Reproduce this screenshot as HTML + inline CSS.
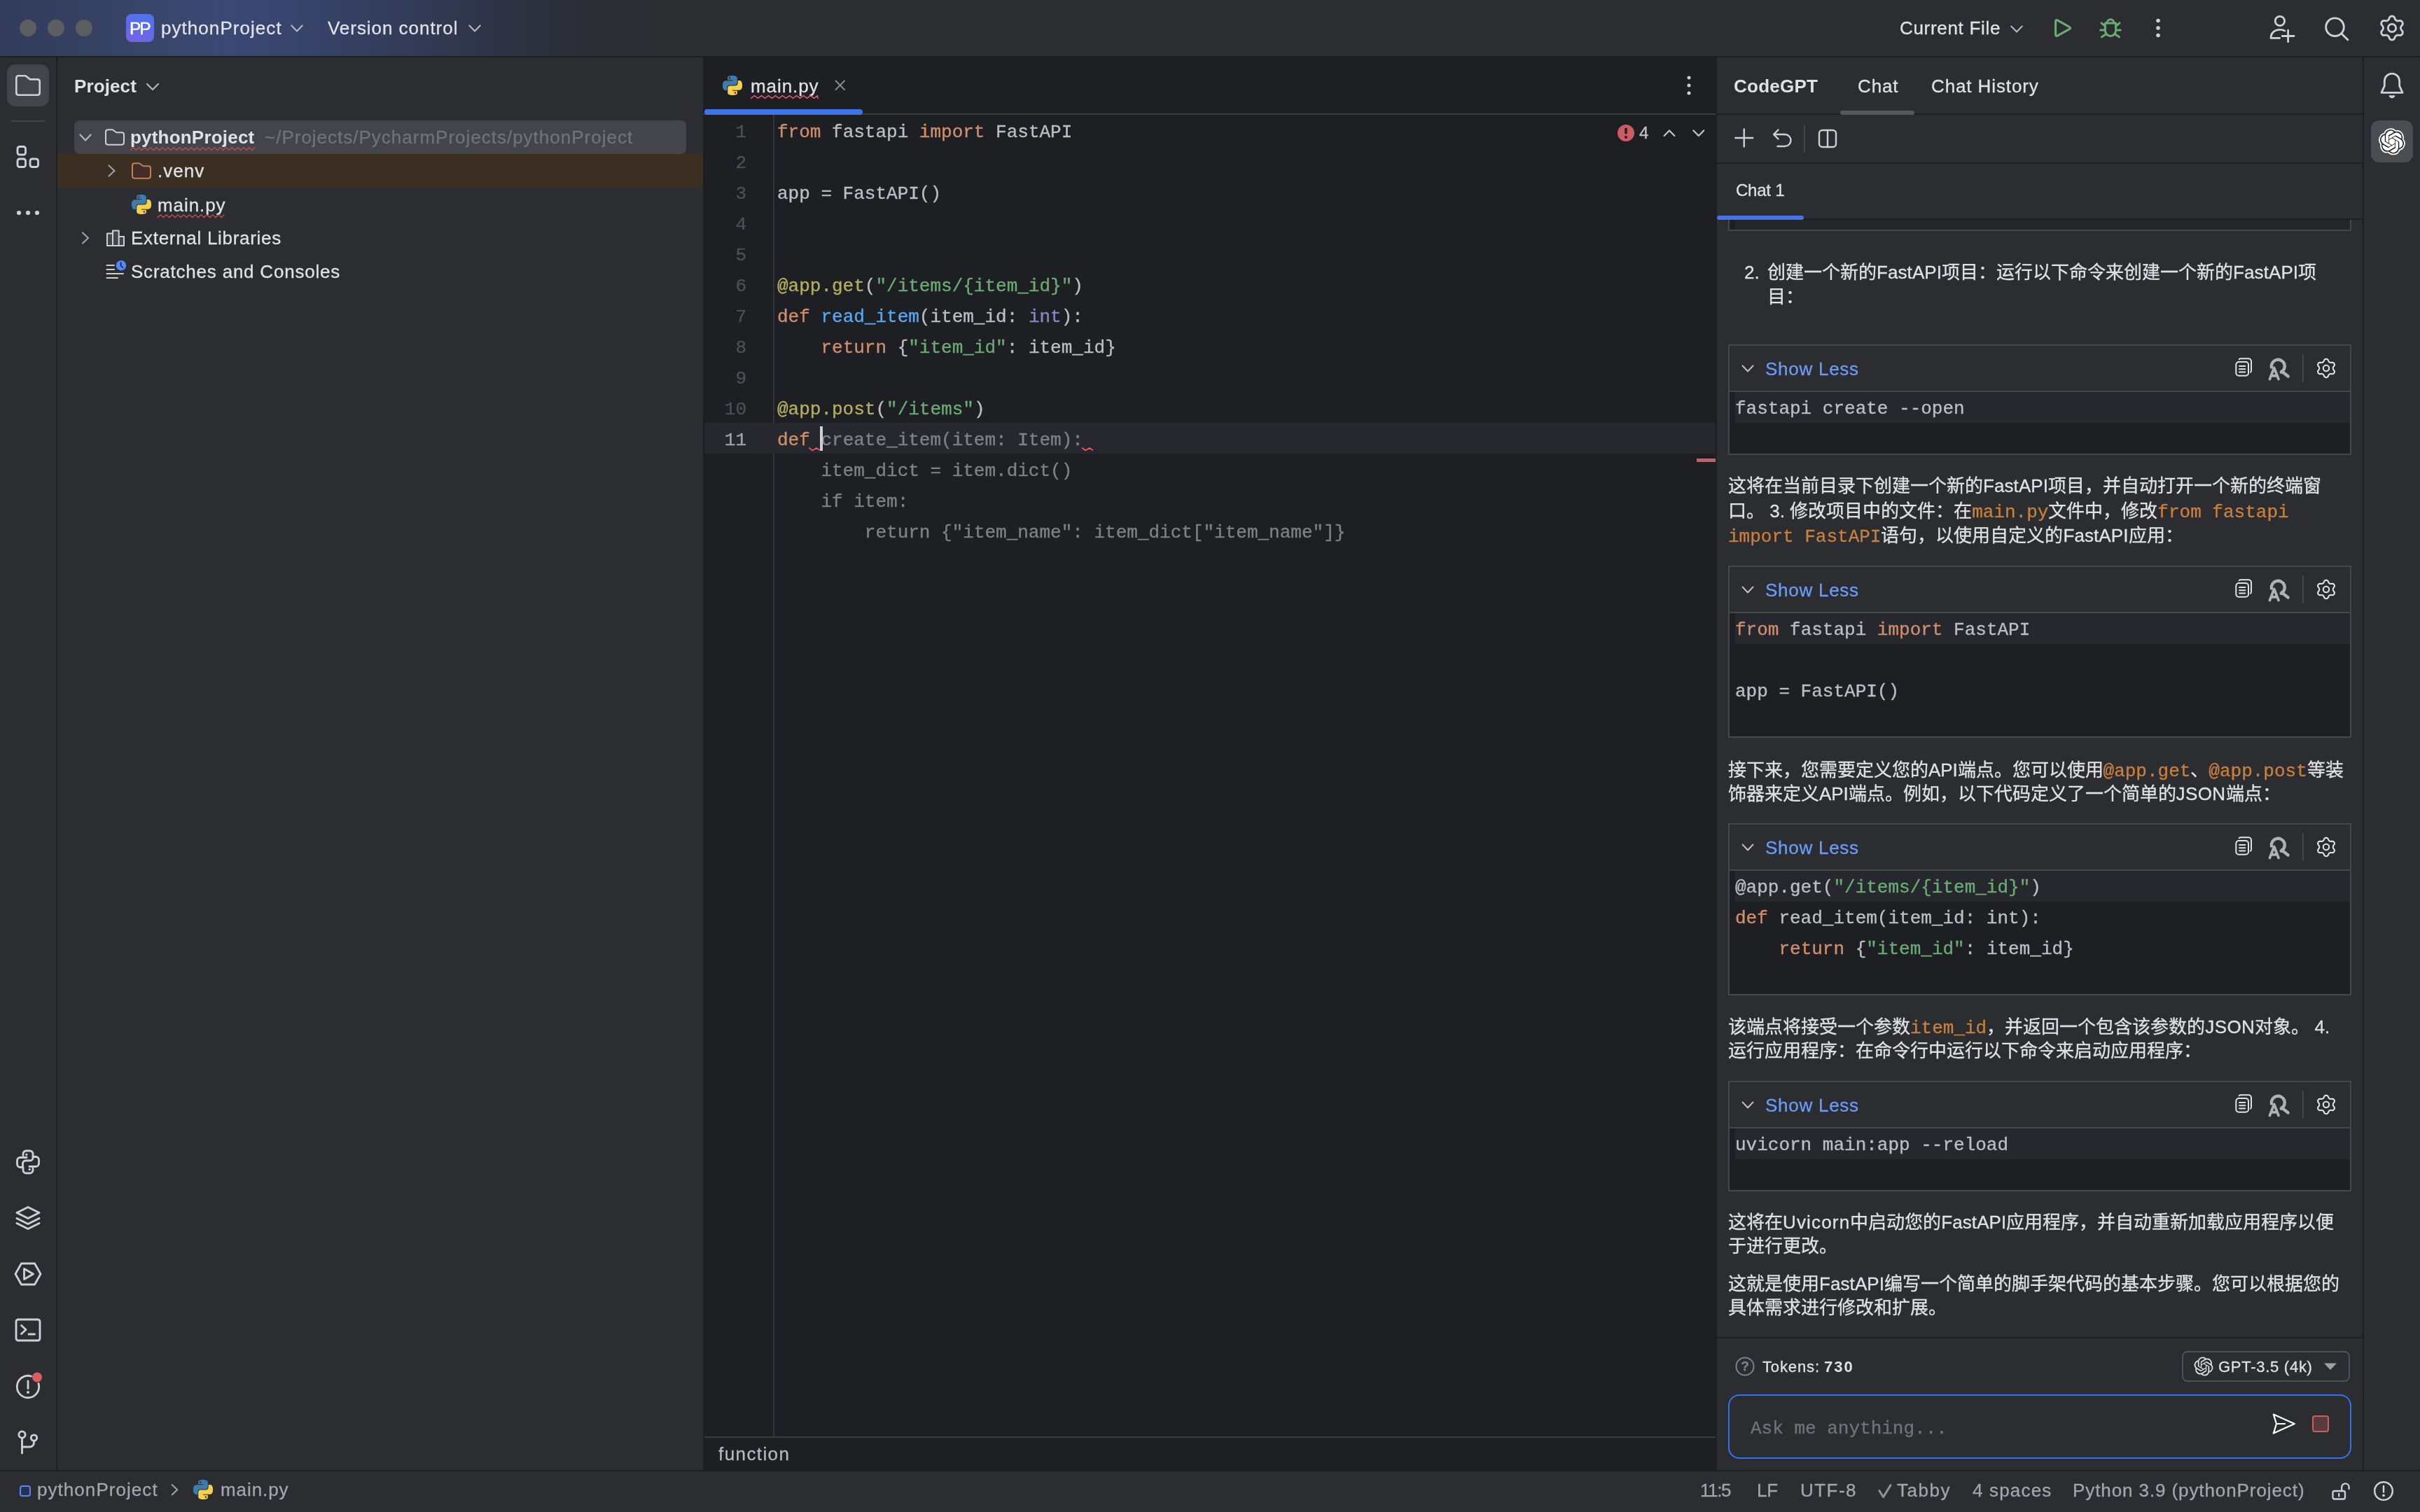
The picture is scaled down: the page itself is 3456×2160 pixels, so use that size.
<!DOCTYPE html>
<html lang="zh-CN"><head><meta charset="utf-8"><title>pythonProject – main.py</title>
<style>
html,body{margin:0;padding:0;font-family:"Liberation Sans",sans-serif}
body{width:3456px;height:2160px;overflow:hidden;position:relative;background:#2b2d30;color:#dfe1e5;font-family:"Liberation Sans",sans-serif;font-size:26px}
body>div{position:absolute}
.s{will-change:transform;white-space:pre;font-family:"Liberation Sans",sans-serif;-webkit-text-stroke:0.3px}
.m{will-change:transform;white-space:pre;font-family:"Liberation Mono",monospace;color:#bcbec4;-webkit-text-stroke:0.35px}
.ov{position:absolute;left:0;top:0;pointer-events:none}
.k{color:#cf8e6d}.st{color:#6aab73}.d{color:#b3ae60}.f{color:#56a8f5}.b{color:#8888c6}.g{color:#7f8185}
.ic{font-family:"Liberation Mono",monospace;color:#c9803e}

</style></head>
<body>
<div style="left:0px;top:0px;width:3456px;height:80px;background:linear-gradient(90deg,#323b5a 0px,#384569 200px,#3b4874 330px,#374268 460px,#323a55 600px,#2e3344 720px,#2c2e36 840px,#2b2d30 960px);"></div>
<div style="left:0px;top:80px;width:3456px;height:2px;background:#1e1f22;"></div>
<div style="left:28px;top:28px;width:24px;height:24px;background:#5d5e62;border-radius:50%"></div>
<div style="left:68px;top:28px;width:24px;height:24px;background:#5d5e62;border-radius:50%"></div>
<div style="left:108px;top:28px;width:24px;height:24px;background:#5d5e62;border-radius:50%"></div>
<div style="left:180px;top:20px;width:40px;height:40px;background:linear-gradient(200deg,#4a74ee 0%,#5f6be9 50%,#7a62e6 100%);border-radius:8px"></div>
<div class="s" style="left:185.4px;top:21.08px;font-size:24.6px;line-height:40px;color:#ffffff;letter-spacing:-2.1px;-webkit-text-stroke:0.5px #fff;">PP</div>
<div class="s" style="left:230px;top:20.49px;font-size:26px;line-height:40px;letter-spacing:1.052px;">pythonProject</div>
<div class="s" style="left:468px;top:20.49px;font-size:26px;line-height:40px;letter-spacing:0.959px;">Version control</div>
<div class="s" style="left:2712.5px;top:20.49px;font-size:26px;line-height:40px;letter-spacing:0.685px;">Current File</div>
<div style="left:80px;top:82px;width:2px;height:2018px;background:#1e1f22;"></div>
<div style="left:10px;top:92px;width:60px;height:60px;background:#43454a;border-radius:12px"></div>
<div style="left:16px;top:172px;width:48px;height:2px;background:#43454a;"></div>
<div class="s" style="left:106px;top:102.99px;font-size:26px;line-height:40px;font-weight:700;-webkit-text-stroke:0;letter-spacing:0.117px;">Project</div>
<div style="left:106px;top:172px;width:874px;height:48px;background:#43454a;border-radius:8px"></div>
<div style="left:82px;top:220px;width:922px;height:48px;background:#3b2f24;"></div>
<div class="s" style="left:186px;top:176.49px;font-size:26px;line-height:40px;font-weight:700;-webkit-text-stroke:0;letter-spacing:0.202px;">pythonProject</div>
<div class="s" style="left:378px;top:176.49px;font-size:26px;line-height:40px;color:#6f737a;letter-spacing:0.996px;">~/Projects/PycharmProjects/pythonProject</div>
<div class="s" style="left:225px;top:224.49px;font-size:26px;line-height:40px;letter-spacing:1.051px;">.venv</div>
<div class="s" style="left:225px;top:272.69px;font-size:26px;line-height:40px;letter-spacing:0.919px;">main.py</div>
<div class="s" style="left:187px;top:320.49px;font-size:26px;line-height:40px;letter-spacing:0.699px;">External Libraries</div>
<div class="s" style="left:187px;top:368.39px;font-size:26px;line-height:40px;letter-spacing:0.781px;">Scratches and Consoles</div>
<div style="left:1004px;top:82px;width:1448px;height:2018px;background:#1e1f22;"></div>
<div style="left:1004px;top:162px;width:1446px;height:2px;background:#393b40;"></div>
<div style="left:1006px;top:156px;width:226px;height:8px;background:#3f73e9;border-radius:4px"></div>
<div class="s" style="left:1072.4px;top:102.99px;font-size:26px;line-height:40px;letter-spacing:0.919px;">main.py</div>
<div style="left:1104px;top:164px;width:2px;height:1888px;background:#313438;"></div>
<div style="left:1006px;top:604px;width:1444px;height:44px;background:#26282e;"></div>
<div style="left:1006px;top:2052px;width:1444px;height:2px;background:#393b40;"></div>
<div class="s" style="left:1026.4px;top:2056.99px;font-size:26px;line-height:40px;color:#b4b8bf;letter-spacing:1.413px;">function</div>
<div style="left:2423px;top:655px;width:27px;height:5px;background:#cf5b62;"></div>
<div class="s" style="left:2341px;top:170.48px;font-size:24px;line-height:40px;color:#c0c2c6;">4</div>
<div class="m" style="left:1110.3px;top:166.80px;font-size:26px;line-height:44px;"><span class="k">from</span> fastapi <span class="k">import</span> FastAPI</div>
<div class="m" style="left:1110.3px;top:254.80px;font-size:26px;line-height:44px;">app = FastAPI()</div>
<div class="m" style="left:1110.3px;top:386.80px;font-size:26px;line-height:44px;"><span class="d">@app.get</span>(<span class="st">"/items/{item_id}"</span>)</div>
<div class="m" style="left:1110.3px;top:430.80px;font-size:26px;line-height:44px;"><span class="k">def</span> <span class="f">read_item</span>(item_id: <span class="b">int</span>):</div>
<div class="m" style="left:1110.3px;top:474.80px;font-size:26px;line-height:44px;">    <span class="k">return</span> {<span class="st">"item_id"</span>: item_id}</div>
<div class="m" style="left:1110.3px;top:562.80px;font-size:26px;line-height:44px;"><span class="d">@app.post</span>(<span class="st">"/items"</span>)</div>
<div class="m" style="left:1110.3px;top:606.80px;font-size:26px;line-height:44px;"><span class="k">def</span> <span class="g">create_item(item: Item):</span></div>
<div class="m" style="left:1110.3px;top:650.80px;font-size:26px;line-height:44px;"><span class="g">    item_dict = item.dict()</span></div>
<div class="m" style="left:1110.3px;top:694.80px;font-size:26px;line-height:44px;"><span class="g">    if item:</span></div>
<div class="m" style="left:1110.3px;top:738.80px;font-size:26px;line-height:44px;"><span class="g">        return {"item_name": item_dict["item_name"]}</span></div>
<div class="m" style="left:1004px;top:166.80px;font-size:26px;line-height:44px;color:#4b5059;width:62px;text-align:right;">1</div>
<div class="m" style="left:1004px;top:210.80px;font-size:26px;line-height:44px;color:#4b5059;width:62px;text-align:right;">2</div>
<div class="m" style="left:1004px;top:254.80px;font-size:26px;line-height:44px;color:#4b5059;width:62px;text-align:right;">3</div>
<div class="m" style="left:1004px;top:298.80px;font-size:26px;line-height:44px;color:#4b5059;width:62px;text-align:right;">4</div>
<div class="m" style="left:1004px;top:342.80px;font-size:26px;line-height:44px;color:#4b5059;width:62px;text-align:right;">5</div>
<div class="m" style="left:1004px;top:386.80px;font-size:26px;line-height:44px;color:#4b5059;width:62px;text-align:right;">6</div>
<div class="m" style="left:1004px;top:430.80px;font-size:26px;line-height:44px;color:#4b5059;width:62px;text-align:right;">7</div>
<div class="m" style="left:1004px;top:474.80px;font-size:26px;line-height:44px;color:#4b5059;width:62px;text-align:right;">8</div>
<div class="m" style="left:1004px;top:518.80px;font-size:26px;line-height:44px;color:#4b5059;width:62px;text-align:right;">9</div>
<div class="m" style="left:1004px;top:562.80px;font-size:26px;line-height:44px;color:#4b5059;width:62px;text-align:right;">10</div>
<div class="m" style="left:1004px;top:606.80px;font-size:26px;line-height:44px;color:#a1a3ab;width:62px;text-align:right;">11</div>
<div style="left:1170.8px;top:608.5px;width:4px;height:35px;background:#ced0d6;"></div>
<div style="left:2452px;top:82px;width:922px;height:2018px;background:#2b2d30;"></div>
<div class="s" style="left:2476.4px;top:102.99px;font-size:26px;line-height:40px;font-weight:700;-webkit-text-stroke:0;letter-spacing:0.258px;">CodeGPT</div>
<div class="s" style="left:2652.6px;top:102.99px;font-size:26px;line-height:40px;letter-spacing:0.854px;">Chat</div>
<div class="s" style="left:2758px;top:102.99px;font-size:26px;line-height:40px;letter-spacing:0.885px;">Chat History</div>
<div style="left:2452px;top:162px;width:922px;height:2px;background:#1e1f22;"></div>
<div style="left:2628px;top:158px;width:106px;height:6px;background:#55585e;border-radius:3px"></div>
<div style="left:2452px;top:232px;width:922px;height:2px;background:#1e1f22;"></div>
<div style="left:2576px;top:178px;width:2px;height:40px;background:#43454a;"></div>
<div class="s" style="left:2478.8px;top:251.68px;font-size:24px;line-height:40px;letter-spacing:-0.231px;">Chat 1</div>
<div style="left:2452px;top:312px;width:922px;height:2px;background:#1e1f22;"></div>
<div style="left:2452px;top:308px;width:124px;height:6px;background:#4573e8;border-radius:3px"></div>
<div style="left:2468px;top:314px;width:890px;height:16px;background:#25262a;border:2px solid #45474c;border-top:none;box-sizing:border-box"></div>
<div style="left:2470px;top:314px;width:8px;height:14px;background:#1e1f22;"></div>
<div style="left:2468px;top:492px;width:890px;height:158px;background:#1e1f22;border:2px solid #45474c;box-sizing:border-box"></div>
<div style="left:2470px;top:494px;width:886px;height:64px;background:#2b2d30;"></div>
<div style="left:2470px;top:558px;width:886px;height:2px;background:#45474c;"></div>
<div style="left:2478px;top:560px;width:878px;height:44px;background:#26282e;"></div>
<div class="s" style="left:2520.6px;top:506.99px;font-size:26px;line-height:40px;color:#6b9bf8;letter-spacing:0.736px;">Show Less</div>
<div style="left:3288px;top:506px;width:2px;height:40px;background:#43454a;"></div>
<div class="m" style="left:2477.8px;top:561.80px;font-size:26px;line-height:44px;">fastapi create --open</div>
<div style="left:2468px;top:808px;width:890px;height:246px;background:#1e1f22;border:2px solid #45474c;box-sizing:border-box"></div>
<div style="left:2470px;top:810px;width:886px;height:64px;background:#2b2d30;"></div>
<div style="left:2470px;top:874px;width:886px;height:2px;background:#45474c;"></div>
<div style="left:2478px;top:876px;width:878px;height:44px;background:#26282e;"></div>
<div class="s" style="left:2520.6px;top:822.99px;font-size:26px;line-height:40px;color:#6b9bf8;letter-spacing:0.736px;">Show Less</div>
<div style="left:3288px;top:822px;width:2px;height:40px;background:#43454a;"></div>
<div class="m" style="left:2477.8px;top:877.80px;font-size:26px;line-height:44px;"><span class="k">from</span> fastapi <span class="k">import</span> FastAPI</div>
<div class="m" style="left:2477.8px;top:965.80px;font-size:26px;line-height:44px;">app = FastAPI()</div>
<div style="left:2468px;top:1176px;width:890px;height:246px;background:#1e1f22;border:2px solid #45474c;box-sizing:border-box"></div>
<div style="left:2470px;top:1178px;width:886px;height:64px;background:#2b2d30;"></div>
<div style="left:2470px;top:1242px;width:886px;height:2px;background:#45474c;"></div>
<div style="left:2478px;top:1244px;width:878px;height:44px;background:#26282e;"></div>
<div class="s" style="left:2520.6px;top:1190.99px;font-size:26px;line-height:40px;color:#6b9bf8;letter-spacing:0.736px;">Show Less</div>
<div style="left:3288px;top:1190px;width:2px;height:40px;background:#43454a;"></div>
<div class="m" style="left:2477.8px;top:1245.80px;font-size:26px;line-height:44px;">@app.get(<span class="st">"/items/{item_id}"</span>)</div>
<div class="m" style="left:2477.8px;top:1289.80px;font-size:26px;line-height:44px;"><span class="k">def</span> read_item(item_id: int):</div>
<div class="m" style="left:2477.8px;top:1333.80px;font-size:26px;line-height:44px;">    <span class="k">return</span> {<span class="st">"item_id"</span>: item_id}</div>
<div style="left:2468px;top:1544px;width:890px;height:158px;background:#1e1f22;border:2px solid #45474c;box-sizing:border-box"></div>
<div style="left:2470px;top:1546px;width:886px;height:64px;background:#2b2d30;"></div>
<div style="left:2470px;top:1610px;width:886px;height:2px;background:#45474c;"></div>
<div style="left:2478px;top:1612px;width:878px;height:44px;background:#26282e;"></div>
<div class="s" style="left:2520.6px;top:1558.99px;font-size:26px;line-height:40px;color:#6b9bf8;letter-spacing:0.736px;">Show Less</div>
<div style="left:3288px;top:1558px;width:2px;height:40px;background:#43454a;"></div>
<div class="m" style="left:2477.8px;top:1613.80px;font-size:26px;line-height:44px;">uvicorn main:app --reload</div>
<div class="s" style="left:2490.7px;top:372.49px;font-size:26px;line-height:34px;">2.</div>
<div class="s" style="left:2524px;top:372.49px;font-size:26px;line-height:34px;">创建一个新的<span style="letter-spacing:0.085px">FastAPI</span>项目：运行以下命令来创建一个新的<span style="letter-spacing:0.085px">FastAPI</span>项</div>
<div class="s" style="left:2524px;top:406.69px;font-size:26px;line-height:34px;">目：</div>
<div class="s" style="left:2468.2px;top:676.59px;font-size:26px;line-height:34px;">这将在当前目录下创建一个新的<span style="letter-spacing:0.085px">FastAPI</span>项目，并自动打开一个新的终端窗</div>
<div class="s" style="left:2468.2px;top:712.99px;font-size:26px;line-height:34px;">口。 3. 修改项目中的文件：在<span class="ic">main.py</span>文件中，修改<span class="ic">from fastapi</span></div>
<div class="s" style="left:2468.2px;top:748.29px;font-size:26px;line-height:34px;"><span class="ic">import FastAPI</span>语句，以使用自定义的<span style="letter-spacing:0.085px">FastAPI</span>应用：</div>
<div class="s" style="left:2468.2px;top:1082.59px;font-size:26px;line-height:34px;">接下来，您需要定义您的<span style="letter-spacing:-0.130px">API</span>端点。您可以使用<span class="ic">@app.get</span>、<span class="ic">@app.post</span>等装</div>
<div class="s" style="left:2468.2px;top:1116.99px;font-size:26px;line-height:34px;">饰器来定义<span style="letter-spacing:-0.130px">API</span>端点。例如，以下代码定义了一个简单的<span style="letter-spacing:0.414px">JSON</span>端点：</div>
<div class="s" style="left:2468.2px;top:1450.49px;font-size:26px;line-height:34px;">该端点将接受一个参数<span class="ic">item_id</span>，并返回一个包含该参数的<span style="letter-spacing:0.414px">JSON</span>对象。 4.</div>
<div class="s" style="left:2468.2px;top:1484.29px;font-size:26px;line-height:34px;">运行应用程序：在命令行中运行以下命令来启动应用程序：</div>
<div class="s" style="left:2468.2px;top:1728.79px;font-size:26px;line-height:34px;">这将在<span style="letter-spacing:1.161px">Uvicorn</span>中启动您的<span style="letter-spacing:0.085px">FastAPI</span>应用程序，并自动重新加载应用程序以便</div>
<div class="s" style="left:2468.2px;top:1762.99px;font-size:26px;line-height:34px;">于进行更改。</div>
<div class="s" style="left:2468.2px;top:1816.59px;font-size:26px;line-height:34px;">这就是使用<span style="letter-spacing:0.085px">FastAPI</span>编写一个简单的脚手架代码的基本步骤。您可以根据您的</div>
<div class="s" style="left:2468.2px;top:1850.79px;font-size:26px;line-height:34px;">具体需求进行修改和扩展。</div>
<div style="left:2452px;top:1910px;width:922px;height:2px;background:#1e1f22;"></div>
<div class="s" style="left:2517px;top:1933.38px;font-size:22px;line-height:40px;letter-spacing:0.867px;">Tokens:</div>
<div class="s" style="left:2604.5px;top:1933.38px;font-size:22px;line-height:40px;font-weight:700;-webkit-text-stroke:0;letter-spacing:2.055px;">730</div>
<div style="left:3116px;top:1930px;width:240px;height:44px;background:transparent;border:2px solid #4e5157;border-radius:8px;box-sizing:border-box"></div>
<div class="s" style="left:3168.3px;top:1933.38px;font-size:22px;line-height:40px;letter-spacing:0.729px;">GPT-3.5 (4k)</div>
<div style="left:2468px;top:1992px;width:890px;height:92px;background:#2b2d30;border:2px solid #3574f0;border-radius:16px;box-sizing:border-box"></div>
<div class="m" style="left:2500px;top:2019.07px;font-size:26px;line-height:44px;color:#6f737a;">Ask me anything...</div>
<div style="left:3302px;top:2022px;width:24px;height:24px;background:#5b3a3b;border:2px solid #c9605d;border-radius:4px;box-sizing:border-box"></div>
<div style="left:3374px;top:82px;width:2px;height:2018px;background:#1e1f22;"></div>
<div style="left:3386px;top:172px;width:60px;height:60px;background:#4b4d53;border-radius:12px"></div>
<div style="left:0px;top:2100px;width:3456px;height:2px;background:#1e1f22;"></div>
<div style="left:28px;top:2122px;width:16px;height:16px;background:#25324d;border:2px solid #548af7;border-radius:4px;box-sizing:border-box"></div>
<div class="s" style="left:53px;top:2108.29px;font-size:26px;line-height:40px;color:#a2a6ad;letter-spacing:1.052px;">pythonProject</div>
<div class="s" style="left:314.8px;top:2108.29px;font-size:26px;line-height:40px;color:#a2a6ad;letter-spacing:0.919px;">main.py</div>
<div class="s" style="left:2428px;top:2108.59px;font-size:26px;line-height:40px;color:#a2a6ad;letter-spacing:-1.411px;">11:5</div>
<div class="s" style="left:2509px;top:2108.59px;font-size:26px;line-height:40px;color:#a2a6ad;letter-spacing:-0.281px;">LF</div>
<div class="s" style="left:2571px;top:2108.59px;font-size:26px;line-height:40px;color:#a2a6ad;letter-spacing:1.465px;">UTF-8</div>
<div class="s" style="left:2709px;top:2108.59px;font-size:26px;line-height:40px;color:#a2a6ad;letter-spacing:1.512px;">Tabby</div>
<div class="s" style="left:2816.6px;top:2108.59px;font-size:26px;line-height:40px;color:#a2a6ad;letter-spacing:1.181px;">4 spaces</div>
<div class="s" style="left:2960px;top:2108.59px;font-size:26px;line-height:40px;color:#a2a6ad;letter-spacing:0.908px;">Python 3.9 (pythonProject)</div>
<div class="s" style="left:2485px;top:1939px;font-size:19px;line-height:26px;color:#7b848f;width:14px;text-align:center;font-weight:700">?</div>
<svg class="ov" width="3456" height="2160" viewBox="0 0 3456 2160">
<g fill="none" stroke="#b9bcc3" stroke-width="2.0" stroke-linecap="round" stroke-linejoin="round" ><path d="M416.25,36.5 L424,44.5 L431.75,36.5"/></g>
<g fill="none" stroke="#b9bcc3" stroke-width="2.0" stroke-linecap="round" stroke-linejoin="round" ><path d="M670.25,36.5 L678,44.5 L685.75,36.5"/></g>
<g fill="none" stroke="#b9bcc3" stroke-width="2.0" stroke-linecap="round" stroke-linejoin="round" ><path d="M2872.25,37.5 L2880,45.5 L2887.75,37.5"/></g>
<g fill="none" stroke="#6aab73" stroke-width="3.1" stroke-linecap="round" stroke-linejoin="round" transform="translate(2947 40)"><path d="M-11.40,-9.10 Q-11.40,-12.60 -8.34,-10.90 L8.14,-1.70 Q11.20,0.00 8.14,1.70 L-8.34,10.90 Q-11.40,12.60 -11.40,9.10 Z"/></g>
<g fill="none" stroke="#6aab73" stroke-width="3.0" stroke-linecap="round" stroke-linejoin="round" transform="translate(3014 40)"><path d="M-5,-7 a5,5.3 0 0 1 10,0"/><path d="M-7.6,-7 h15.2 v10.5 a7.6,8 0 0 1 -15.2,0 z"/><path d="M-8.5,3 h-5.8 M8.5,3 h5.8 M-8,-3 l-5,-4.2 M8,-3 l5,-4.2 M-6.8,9 l-5.7,3.8 M6.8,9 l5.7,3.8"/></g>
<circle cx="3082" cy="29.5" r="2.8" fill="#ced0d6"/>
<circle cx="3082" cy="40" r="2.8" fill="#ced0d6"/>
<circle cx="3082" cy="50.5" r="2.8" fill="#ced0d6"/>
<g fill="none" stroke="#ced0d6" stroke-width="2.8" stroke-linecap="round" stroke-linejoin="round" ><circle cx="3255.9" cy="30" r="6.7" /><path d="M3255.6,54.4 H3243 C3243,47 3248.5,42.4 3256,42.4 C3258.5,42.4 3260.8,42.9 3262.8,43.9"/><path d="M3267.6,43.2 v16.6 M3259.2,51.5 h16.8"/></g>
<g fill="none" stroke="#ced0d6" stroke-width="2.9" stroke-linecap="round" stroke-linejoin="round" ><circle cx="3334.5" cy="38.7" r="12.8" /><path d="M3343.8,48 L3352.8,56.8"/></g>
<g fill="none" stroke="#ced0d6" stroke-width="2.8" stroke-linecap="round" stroke-linejoin="round" transform="translate(3416 40)"><path d="M12.50,-0.00 L12.55,-0.82 L12.75,-1.68 L13.29,-2.64 L14.25,-3.82 L15.10,-5.13 L15.38,-6.37 L15.18,-7.49 L14.72,-8.50 L14.07,-9.40 L13.20,-10.13 L11.99,-10.52 L10.43,-10.43 L8.93,-10.19 L7.83,-10.20 L6.98,-10.45 L6.25,-10.83 L5.56,-11.28 L4.92,-11.88 L4.36,-12.83 L3.82,-14.25 L3.11,-15.64 L2.17,-16.50 L1.11,-16.89 L0.00,-17.00 L-1.11,-16.89 L-2.17,-16.50 L-3.11,-15.64 L-3.82,-14.25 L-4.36,-12.83 L-4.92,-11.88 L-5.56,-11.28 L-6.25,-10.83 L-6.98,-10.45 L-7.83,-10.20 L-8.93,-10.19 L-10.43,-10.43 L-11.99,-10.52 L-13.20,-10.13 L-14.07,-9.40 L-14.72,-8.50 L-15.18,-7.49 L-15.38,-6.37 L-15.10,-5.13 L-14.25,-3.82 L-13.29,-2.64 L-12.75,-1.68 L-12.55,-0.82 L-12.50,-0.00 L-12.55,0.82 L-12.75,1.68 L-13.29,2.64 L-14.25,3.82 L-15.10,5.13 L-15.38,6.37 L-15.18,7.49 L-14.72,8.50 L-14.07,9.40 L-13.20,10.13 L-11.99,10.52 L-10.43,10.43 L-8.93,10.19 L-7.83,10.20 L-6.98,10.45 L-6.25,10.83 L-5.56,11.28 L-4.92,11.88 L-4.36,12.83 L-3.82,14.25 L-3.11,15.64 L-2.17,16.50 L-1.11,16.89 L-0.00,17.00 L1.11,16.89 L2.17,16.50 L3.11,15.64 L3.82,14.25 L4.36,12.83 L4.92,11.88 L5.56,11.28 L6.25,10.83 L6.98,10.45 L7.83,10.20 L8.93,10.19 L10.43,10.43 L11.99,10.52 L13.20,10.13 L14.07,9.40 L14.72,8.50 L15.18,7.49 L15.38,6.37 L15.10,5.13 L14.25,3.82 L13.29,2.64 L12.75,1.68 L12.55,0.82Z"/><circle cx="0" cy="0" r="5.7" /></g>
<g fill="none" stroke="#ced0d6" stroke-width="2.6" stroke-linecap="round" stroke-linejoin="round" transform="translate(40 122)"><path d="M-16.7,-10.5 Q-16.7,-13.7 -13.5,-13.7 H-3.58 L3.0100000000000007,-8.599999999999998 H13.5 Q16.7,-8.599999999999998 16.7,-5.399999999999998 V10.5 Q16.7,13.7 13.5,13.7 H-13.5 Q-16.7,13.7 -16.7,10.5 Z"/></g>
<g fill="none" stroke="#ced0d6" stroke-width="2.85" stroke-linecap="round" stroke-linejoin="round" ><rect x="25" y="209.5" width="11.5" height="11.5" rx="3"/><rect x="25" y="227" width="11.5" height="11.5" rx="3"/><rect x="43" y="227" width="11.5" height="11.5" rx="3"/></g>
<circle cx="27" cy="304" r="3.1" fill="#ced0d6"/>
<circle cx="40" cy="304" r="3.1" fill="#ced0d6"/>
<circle cx="53" cy="304" r="3.1" fill="#ced0d6"/>
<g fill="none" stroke="#ced0d6" stroke-width="2.85" stroke-linecap="round" stroke-linejoin="round" transform="translate(40 1660)"><path d="M-7,-9.5 v-2 a4.5,4.5 0 0 1 4.5,-4.5 h5 a4.5,4.5 0 0 1 4.5,4.5 v5.5 a4,4 0 0 1 -4,4 h-6.5 a4,4 0 0 0 -4,4 v5.5 h-3.5 a4.5,4.5 0 0 1 -4.5,-4.5 v-5 a4.5,4.5 0 0 1 4.5,-4.5 h9"/><path d="M7,9.5 v2 a4.5,4.5 0 0 1 -4.5,4.5 h-5 a4.5,4.5 0 0 1 -4.5,-4.5 v-4 M7,-7.5 h4 a4.5,4.5 0 0 1 4.5,4.5 v5 a4.5,4.5 0 0 1 -4.5,4.5 h-9"/><circle cx="-2.2" cy="-10.6" r="1.1" fill="#ced0d6" stroke-width="1.2"/><circle cx="2.2" cy="10.6" r="1.1" fill="#ced0d6" stroke-width="1.2"/></g>
<g fill="none" stroke="#ced0d6" stroke-width="2.85" stroke-linecap="round" stroke-linejoin="round" transform="translate(40 1740)"><path d="M0,-15.5 L16,-7.5 L0,0.5 L-16,-7.5 Z M-16,0.5 L0,8.5 L16,0.5 M-16,7.5 L0,15.5 L16,7.5"/></g>
<g fill="none" stroke="#ced0d6" stroke-width="2.85" stroke-linecap="round" stroke-linejoin="round" transform="translate(40 1820)"><path d="M-18,0 L-9.5,-15 H9.5 L18,0 L9.5,15 H-9.5 Z M-5.5,-7.5 L7.5,0 L-5.5,7.5 Z"/></g>
<g fill="none" stroke="#ced0d6" stroke-width="2.85" stroke-linecap="round" stroke-linejoin="round" transform="translate(40 1900)"><rect x="-17" y="-15" width="34" height="30" rx="3"/><path d="M-9.5,-6.5 L-3,-0.5 L-9.5,5.5 M1,6 H9.5"/></g>
<g fill="none" stroke="#ced0d6" stroke-width="2.8" stroke-linecap="round" stroke-linejoin="round" transform="translate(40 1981)"><path d="M4.5,-15 A15.7,15.7 0 1 0 15,-4.5"/><path d="M0,-8 V2.5"/></g>
<circle cx="40" cy="1989" r="2" fill="#ced0d6"/>
<circle cx="53" cy="1967.5" r="7" fill="#db5c5c"/>
<g fill="none" stroke="#ced0d6" stroke-width="2.85" stroke-linecap="round" stroke-linejoin="round" transform="translate(40 2060)"><circle cx="-8.5" cy="-10.5" r="4.6" /><circle cx="8.5" cy="-6" r="4.2" /><path d="M-8.5,-5.5 V16 M8.5,-1.5 V1 a6,6 0 0 1 -6,6 H-8.5"/></g>
<g fill="none" stroke="#b4b8bf" stroke-width="2.2" stroke-linecap="round" stroke-linejoin="round" ><path d="M210.0,120.0 L218,128.0 L226.0,120.0"/></g>
<g fill="none" stroke="#b4b8bf" stroke-width="2.2" stroke-linecap="round" stroke-linejoin="round" ><path d="M114.5,192.5 L122,200.5 L129.5,192.5"/></g>
<g fill="none" stroke="#ced0d6" stroke-width="2.0" stroke-linecap="round" stroke-linejoin="round" transform="translate(164 196)"><path d="M-13.0,-7.55 Q-13.0,-10.75 -9.8,-10.75 H-3.24 L2.3555,-6.755 H9.8 Q13.0,-6.755 13.0,-3.5549999999999997 V7.55 Q13.0,10.75 9.8,10.75 H-9.8 Q-13.0,10.75 -13.0,7.55 Z"/></g>
<g fill="none" stroke="#9da0a8" stroke-width="2.2" stroke-linecap="round" stroke-linejoin="round" ><path d="M155.5,236.5 L163.5,244 L155.5,251.5"/></g>
<g fill="#412e28" stroke="#c77d55" stroke-width="2.0" stroke-linecap="round" stroke-linejoin="round" transform="translate(202 244)"><path d="M-13.0,-7.55 Q-13.0,-10.75 -9.8,-10.75 H-3.24 L2.3555,-6.755 H9.8 Q13.0,-6.755 13.0,-3.5549999999999997 V7.55 Q13.0,10.75 9.8,10.75 H-9.8 Q-13.0,10.75 -13.0,7.55 Z"/></g>
<g transform="translate(188 278) scale(1.1666666666666667)" fill-rule="evenodd"><path fill="#3f7cad" d="M14.25.18l.9.2.73.26.59.3.45.32.34.34.25.34.16.33.1.3.04.26.02.2-.01.13V8.5l-.05.63-.13.55-.21.46-.26.38-.3.31-.33.25-.35.19-.35.14-.33.1-.3.07-.26.04-.21.02H8.77l-.69.05-.59.14-.5.22-.41.27-.33.32-.27.35-.2.36-.15.37-.1.35-.07.32-.04.27-.02.21v3.06H3.17l-.21-.03-.28-.07-.32-.12-.35-.18-.36-.26-.36-.36-.35-.46-.32-.59-.28-.73-.21-.88-.14-1.05-.05-1.23.06-1.22.16-1.04.24-.87.32-.71.36-.57.4-.44.42-.33.42-.24.4-.16.36-.1.32-.05.24-.01h.16l.06.01h8.16v-.83H6.18l-.01-2.75-.02-.37.05-.34.11-.31.17-.28.25-.26.31-.23.38-.2.44-.18.51-.15.58-.12.64-.1.71-.06.77-.04.84-.02 1.27.05zM7.95 2.16l-.23.33-.08.41.08.41.23.34.33.22.41.09.41-.09.33-.22.23-.34.08-.41-.08-.41-.23-.33-.33-.22-.41-.09-.41.09z"/><path fill="#f6d04a" d="M21.04 6.11l.28.06.32.12.35.18.36.27.36.35.35.47.32.59.28.73.21.88.14 1.04.05 1.23-.06 1.23-.16 1.04-.24.86-.32.71-.36.57-.4.45-.42.33-.42.24-.4.16-.36.09-.32.05-.24.02-.16-.01h-8.22v.82h5.84l.01 2.76.02.36-.05.34-.11.31-.17.29-.25.25-.31.24-.38.2-.44.17-.51.15-.58.13-.64.09-.71.07-.77.04-.84.01-1.27-.04-1.07-.14-.9-.2-.73-.25-.59-.3-.45-.33-.34-.34-.25-.34-.16-.33-.1-.3-.04-.25-.02-.2.01-.13v-5.34l.05-.64.13-.54.21-.46.26-.38.3-.32.33-.24.35-.2.35-.14.33-.1.3-.06.26-.04.21-.02.13-.01h5.84l.69-.05.59-.14.5-.21.41-.28.33-.32.27-.35.2-.36.15-.36.1-.35.07-.32.04-.28.02-.21V6.07h2.09l.14.01zM14.57 20.36l-.23.33-.08.41.08.41.23.33.33.23.41.08.41-.08.33-.23.23-.33.08-.41-.08-.41-.23-.33-.33-.23-.41-.08-.41.08z"/></g>
<g fill="none" stroke="#9da0a8" stroke-width="2.2" stroke-linecap="round" stroke-linejoin="round" ><path d="M118.0,332.5 L126.0,340 L118.0,347.5"/></g>
<g fill="#43454a" stroke="#ced0d6" stroke-width="2.0" stroke-linecap="round" stroke-linejoin="round" ><path d="M153,351 V333.5 h8 V351 M161,351 V329.5 h8.7 V351 M169.7,351 V338 h7.3 V351 Z M153,351 H177"/></g>
<g fill="none" stroke="#ced0d6" stroke-width="2.0" stroke-linecap="round" stroke-linejoin="round" ><path d="M152.5,379 H163 M152.5,385 H163 M152.5,391 H176 M152.5,397 H168"/></g>
<circle cx="173" cy="379.2" r="7.2" fill="#548af7"/>
<g fill="none" stroke="#1e2a4a" stroke-width="1.8" stroke-linecap="round" stroke-linejoin="round" ><path d="M172.6,375 V379.6 L175.4,382.3"/></g>
<g fill="none" stroke="#bd4a46" stroke-width="1.5" stroke-linecap="round" stroke-linejoin="round" ><path d="M186.0,214.5 L190.2,210.7 L194.3,214.5 L198.5,210.7 L202.6,214.5 L206.8,210.7 L210.9,214.5 L215.1,210.7 L219.2,214.5 L223.4,210.7 L227.5,214.5 L231.7,210.7 L235.8,214.5 L240.0,210.7 L244.1,214.5 L248.3,210.7 L252.4,214.5 L256.6,210.7 L260.7,214.5 L264.9,210.7 L269.0,214.5 L273.1,210.7 L277.3,214.5 L281.4,210.7 L285.6,214.5 L289.7,210.7 L293.9,214.5 L298.0,210.7 L302.2,214.5 L306.3,210.7 L310.5,214.5 L314.6,210.7 L318.8,214.5 L322.9,210.7 L327.1,214.5 L331.2,210.7 L335.4,214.5 L339.5,210.7 L343.7,214.5 L347.8,210.7 L352.0,214.5 L356.1,210.7 L360.3,214.5 L364.0,210.7"/></g>
<g fill="none" stroke="#bd4a46" stroke-width="1.5" stroke-linecap="round" stroke-linejoin="round" ><path d="M225.0,310.6 L229.2,306.8 L233.3,310.6 L237.5,306.8 L241.6,310.6 L245.8,306.8 L249.9,310.6 L254.1,306.8 L258.2,310.6 L262.4,306.8 L266.5,310.6 L270.6,306.8 L274.8,310.6 L278.9,306.8 L283.1,310.6 L287.2,306.8 L291.4,310.6 L295.5,306.8 L299.7,310.6 L303.8,306.8 L308.0,310.6 L312.1,306.8 L316.3,310.6 L320.0,306.8"/></g>
<g transform="translate(1032 108) scale(1.1666666666666667)" fill-rule="evenodd"><path fill="#3f7cad" d="M14.25.18l.9.2.73.26.59.3.45.32.34.34.25.34.16.33.1.3.04.26.02.2-.01.13V8.5l-.05.63-.13.55-.21.46-.26.38-.3.31-.33.25-.35.19-.35.14-.33.1-.3.07-.26.04-.21.02H8.77l-.69.05-.59.14-.5.22-.41.27-.33.32-.27.35-.2.36-.15.37-.1.35-.07.32-.04.27-.02.21v3.06H3.17l-.21-.03-.28-.07-.32-.12-.35-.18-.36-.26-.36-.36-.35-.46-.32-.59-.28-.73-.21-.88-.14-1.05-.05-1.23.06-1.22.16-1.04.24-.87.32-.71.36-.57.4-.44.42-.33.42-.24.4-.16.36-.1.32-.05.24-.01h.16l.06.01h8.16v-.83H6.18l-.01-2.75-.02-.37.05-.34.11-.31.17-.28.25-.26.31-.23.38-.2.44-.18.51-.15.58-.12.64-.1.71-.06.77-.04.84-.02 1.27.05zM7.95 2.16l-.23.33-.08.41.08.41.23.34.33.22.41.09.41-.09.33-.22.23-.34.08-.41-.08-.41-.23-.33-.33-.22-.41-.09-.41.09z"/><path fill="#f6d04a" d="M21.04 6.11l.28.06.32.12.35.18.36.27.36.35.35.47.32.59.28.73.21.88.14 1.04.05 1.23-.06 1.23-.16 1.04-.24.86-.32.71-.36.57-.4.45-.42.33-.42.24-.4.16-.36.09-.32.05-.24.02-.16-.01h-8.22v.82h5.84l.01 2.76.02.36-.05.34-.11.31-.17.29-.25.25-.31.24-.38.2-.44.17-.51.15-.58.13-.64.09-.71.07-.77.04-.84.01-1.27-.04-1.07-.14-.9-.2-.73-.25-.59-.3-.45-.33-.34-.34-.25-.34-.16-.33-.1-.3-.04-.25-.02-.2.01-.13v-5.34l.05-.64.13-.54.21-.46.26-.38.3-.32.33-.24.35-.2.35-.14.33-.1.3-.06.26-.04.21-.02.13-.01h5.84l.69-.05.59-.14.5-.21.41-.28.33-.32.27-.35.2-.36.15-.36.1-.35.07-.32.04-.28.02-.21V6.07h2.09l.14.01zM14.57 20.36l-.23.33-.08.41.08.41.23.33.33.23.41.08.41-.08.33-.23.23-.33.08-.41-.08-.41-.23-.33-.33-.23-.41-.08-.41.08z"/></g>
<g fill="none" stroke="#df5a6c" stroke-width="1.5" stroke-linecap="round" stroke-linejoin="round" ><path d="M1072.5,140.4 L1077.5,136.6 L1082.5,140.4 L1087.5,136.6 L1092.5,140.4 L1097.5,136.6 L1102.5,140.4 L1107.5,136.6 L1112.5,140.4 L1117.5,136.6 L1122.5,140.4 L1127.5,136.6 L1132.5,140.4 L1137.5,136.6 L1142.5,140.4 L1147.5,136.6 L1152.5,140.4 L1157.5,136.6 L1162.5,140.4 L1167.5,136.6 L1168.0,140.4"/></g>
<g fill="none" stroke="#868a91" stroke-width="2.0" stroke-linecap="round" stroke-linejoin="round" ><path d="M1193.5,115.5 L1206,128 M1206,115.5 L1193.5,128"/></g>
<circle cx="2412" cy="111" r="2.5" fill="#ced0d6"/>
<circle cx="2412" cy="122" r="2.5" fill="#ced0d6"/>
<circle cx="2412" cy="133" r="2.5" fill="#ced0d6"/>
<circle cx="2322" cy="190" r="12" fill="#cd5b63"/>
<rect x="2320.2" y="182.5" width="3.6" height="9" rx="1.6" fill="#2b1c1e"/><circle cx="2322" cy="196" r="2.1" fill="#2b1c1e"/>
<g fill="none" stroke="#c3c5ca" stroke-width="2.2" stroke-linecap="round" stroke-linejoin="round" ><path d="M2376.6,194.0 L2384,186.39999999999998 L2391.4,194.0"/></g>
<g fill="none" stroke="#c3c5ca" stroke-width="2.2" stroke-linecap="round" stroke-linejoin="round" ><path d="M2418.4,186.39999999999998 L2425.8,194.0 L2433.2000000000003,186.39999999999998"/></g>
<g fill="none" stroke="#f75464" stroke-width="1.6" stroke-linecap="round" stroke-linejoin="round" ><path d="M1155.7,640 L1160.2,643.5 L1166,640 L1170.6,643"/></g>
<g fill="none" stroke="#f75464" stroke-width="1.6" stroke-linecap="round" stroke-linejoin="round" ><path d="M1545.5,640 L1550,643.5 L1555.8,640 L1560.4,643"/></g>
<g fill="none" stroke="#ced0d6" stroke-width="2.4" stroke-linecap="round" stroke-linejoin="round" ><path d="M2478.2,197 H2503.2 M2490.7,184.5 V209.5"/></g>
<g fill="none" stroke="#ced0d6" stroke-width="2.4" stroke-linecap="round" stroke-linejoin="round" ><path d="M2539.5,185.5 L2533,192 L2539.5,198.5 M2533.5,192 H2549 a8.5,8.5 0 0 1 0,17 H2538.5"/></g>
<g fill="none" stroke="#ced0d6" stroke-width="2.4" stroke-linecap="round" stroke-linejoin="round" ><rect x="2598" y="186" width="24" height="24" rx="4.5"/><path d="M2610,186 V210"/></g>
<g fill="none" stroke="#ced0d6" stroke-width="2.8" stroke-linecap="round" stroke-linejoin="round" ><path d="M3400.9,132.4 L3405.3,122.8 V115.8 a10.7,10.7 0 0 1 21.4,0 V122.8 L3431.1,132.4 Z"/></g>
<path d="M3411.6,136.2 h8.9 a4.45,4.1 0 0 1 -8.9,0 z" fill="#ced0d6"/>
<g transform="translate(3398.4 184.70000000000002) scale(1.4666666666666668)"><path d="M22.2819 9.8211a5.9847 5.9847 0 0 0-.5157-4.9108 6.0462 6.0462 0 0 0-6.5098-2.9A6.0651 6.0651 0 0 0 4.9807 4.1818a5.9847 5.9847 0 0 0-3.9977 2.9 6.0462 6.0462 0 0 0 .7427 7.0966 5.98 5.98 0 0 0 .511 4.9107 6.051 6.051 0 0 0 6.5146 2.9001A5.9847 5.9847 0 0 0 13.2599 24a6.0557 6.0557 0 0 0 5.7718-4.2058 5.9894 5.9894 0 0 0 3.9977-2.9001 6.0557 6.0557 0 0 0-.7475-7.0729z" fill="#ffffff" stroke="#ffffff" stroke-width="1.9" stroke-linejoin="round"/><path d="M22.2819 9.8211a5.9847 5.9847 0 0 0-.5157-4.9108 6.0462 6.0462 0 0 0-6.5098-2.9A6.0651 6.0651 0 0 0 4.9807 4.1818a5.9847 5.9847 0 0 0-3.9977 2.9 6.0462 6.0462 0 0 0 .7427 7.0966 5.98 5.98 0 0 0 .511 4.9107 6.051 6.051 0 0 0 6.5146 2.9001A5.9847 5.9847 0 0 0 13.2599 24a6.0557 6.0557 0 0 0 5.7718-4.2058 5.9894 5.9894 0 0 0 3.9977-2.9001 6.0557 6.0557 0 0 0-.7475-7.0729zm-9.022 12.6081a4.4755 4.4755 0 0 1-2.8764-1.0408l.1419-.0804 4.7783-2.7582a.7948.7948 0 0 0 .3927-.6813v-6.7369l2.02 1.1686a.071.071 0 0 1 .038.052v5.5826a4.504 4.504 0 0 1-4.4945 4.4944zm-9.6607-4.1254a4.4708 4.4708 0 0 1-.5346-3.0137l.142.0852 4.783 2.7582a.7712.7712 0 0 0 .7806 0l5.8428-3.3685v2.3324a.0804.0804 0 0 1-.0332.0615L9.74 19.9502a4.4992 4.4992 0 0 1-6.1408-1.6464zM2.3408 7.8956a4.485 4.485 0 0 1 2.3655-1.9728V11.6a.7664.7664 0 0 0 .3879.6765l5.8144 3.3543-2.0201 1.1685a.0757.0757 0 0 1-.071 0l-4.8303-2.7865A4.504 4.504 0 0 1 2.3408 7.872zm16.5963 3.8558L13.1038 8.364 15.1192 7.2a.0757.0757 0 0 1 .071 0l4.8303 2.7913a4.4944 4.4944 0 0 1-.6765 8.1042v-5.6772a.79.79 0 0 0-.407-.667zm2.0107-3.0231l-.142-.0852-4.7735-2.7818a.7759.7759 0 0 0-.7854 0L9.409 9.2297V6.8974a.0662.0662 0 0 1 .0284-.0615l4.8303-2.7866a4.4992 4.4992 0 0 1 6.6802 4.66zM8.3065 12.863l-2.02-1.1638a.0804.0804 0 0 1-.038-.0567V6.0742a4.4992 4.4992 0 0 1 7.3757-3.4537l-.142.0805L8.704 5.459a.7948.7948 0 0 0-.3927.6813zm1.0976-2.3654l2.602-1.4998 2.6069 1.4998v2.9994l-2.5974 1.4997-2.6067-1.4997Z" fill="#17181a" stroke="#ffffff" stroke-width="0.6"/></g>
<g fill="none" stroke="#bdc0c6" stroke-width="2.0" stroke-linecap="round" stroke-linejoin="round" ><path d="M2488.5,522.5 L2496,530.5 L2503.5,522.5"/></g>
<g fill="none" stroke="#dfe1e5" stroke-width="2.0" stroke-linecap="round" stroke-linejoin="round" ><rect x="3193.3" y="517" width="17.7" height="19.8" rx="4"/><path d="M3197.6,513.3 a3,3 0 0 1 2.5,-1 h10.9 a4,4 0 0 1 4,4 v13 a3,3 0 0 1 -1,2.5"/></g>
<g fill="none" stroke="#dfe1e5" stroke-width="2.0" stroke-linecap="round" stroke-linejoin="round" stroke-linecap="butt"><path d="M3198,523 H3206.3 M3198,527.2 H3206.3 M3198,531.4 H3206.3"/></g>
<g fill="none" stroke="#b0b1b3" stroke-width="4.4" stroke-linecap="round" stroke-linejoin="round" stroke-linecap="butt"><path d="M3243.89,524.62 A9.5,9.5 0 1 1 3257.76,531.69"/><path d="M3258.5,530.5 L3267.6,537.6"/></g>
<g fill="none" stroke="#b0b1b3" stroke-width="3.7" stroke-linecap="round" stroke-linejoin="round" stroke-linecap="butt" stroke-linejoin="miter"><path d="M3241.4,541.6 L3247.7,525.5 L3254,541.6 M3244,536.8 H3251.4"/></g>
<g fill="none" stroke="#dfe1e5" stroke-width="2.1" stroke-linecap="round" stroke-linejoin="round" transform="translate(3322 526)"><path d="M9.80,-0.00 L9.83,-0.64 L9.98,-1.31 L10.39,-2.07 L11.11,-2.98 L11.75,-3.99 L11.95,-4.95 L11.79,-5.81 L11.43,-6.60 L10.93,-7.30 L10.26,-7.87 L9.33,-8.18 L8.13,-8.13 L6.98,-7.96 L6.13,-7.99 L5.48,-8.19 L4.90,-8.49 L4.36,-8.84 L3.85,-9.30 L3.40,-10.03 L2.98,-11.11 L2.42,-12.17 L1.69,-12.82 L0.86,-13.12 L0.00,-13.20 L-0.86,-13.12 L-1.69,-12.82 L-2.42,-12.17 L-2.98,-11.11 L-3.40,-10.03 L-3.85,-9.30 L-4.36,-8.84 L-4.90,-8.49 L-5.48,-8.19 L-6.13,-7.99 L-6.98,-7.96 L-8.13,-8.13 L-9.33,-8.18 L-10.26,-7.87 L-10.93,-7.30 L-11.43,-6.60 L-11.79,-5.81 L-11.95,-4.95 L-11.75,-3.99 L-11.11,-2.98 L-10.39,-2.07 L-9.98,-1.31 L-9.83,-0.64 L-9.80,-0.00 L-9.83,0.64 L-9.98,1.31 L-10.39,2.07 L-11.11,2.98 L-11.75,3.99 L-11.95,4.95 L-11.79,5.81 L-11.43,6.60 L-10.93,7.30 L-10.26,7.87 L-9.33,8.18 L-8.13,8.13 L-6.98,7.96 L-6.13,7.99 L-5.48,8.19 L-4.90,8.49 L-4.36,8.84 L-3.85,9.30 L-3.40,10.03 L-2.98,11.11 L-2.42,12.17 L-1.69,12.82 L-0.86,13.12 L-0.00,13.20 L0.86,13.12 L1.69,12.82 L2.42,12.17 L2.98,11.11 L3.40,10.03 L3.85,9.30 L4.36,8.84 L4.90,8.49 L5.48,8.19 L6.13,7.99 L6.98,7.96 L8.13,8.13 L9.33,8.18 L10.26,7.87 L10.93,7.30 L11.43,6.60 L11.79,5.81 L11.95,4.95 L11.75,3.99 L11.11,2.98 L10.39,2.07 L9.98,1.31 L9.83,0.64Z"/><circle cx="0" cy="0" r="4.2" /></g>
<g fill="none" stroke="#bdc0c6" stroke-width="2.0" stroke-linecap="round" stroke-linejoin="round" ><path d="M2488.5,838.5 L2496,846.5 L2503.5,838.5"/></g>
<g fill="none" stroke="#dfe1e5" stroke-width="2.0" stroke-linecap="round" stroke-linejoin="round" ><rect x="3193.3" y="833" width="17.7" height="19.8" rx="4"/><path d="M3197.6,829.3 a3,3 0 0 1 2.5,-1 h10.9 a4,4 0 0 1 4,4 v13 a3,3 0 0 1 -1,2.5"/></g>
<g fill="none" stroke="#dfe1e5" stroke-width="2.0" stroke-linecap="round" stroke-linejoin="round" stroke-linecap="butt"><path d="M3198,839 H3206.3 M3198,843.2 H3206.3 M3198,847.4 H3206.3"/></g>
<g fill="none" stroke="#b0b1b3" stroke-width="4.4" stroke-linecap="round" stroke-linejoin="round" stroke-linecap="butt"><path d="M3243.89,840.62 A9.5,9.5 0 1 1 3257.76,847.69"/><path d="M3258.5,846.5 L3267.6,853.6"/></g>
<g fill="none" stroke="#b0b1b3" stroke-width="3.7" stroke-linecap="round" stroke-linejoin="round" stroke-linecap="butt" stroke-linejoin="miter"><path d="M3241.4,857.6 L3247.7,841.5 L3254,857.6 M3244,852.8 H3251.4"/></g>
<g fill="none" stroke="#dfe1e5" stroke-width="2.1" stroke-linecap="round" stroke-linejoin="round" transform="translate(3322 842)"><path d="M9.80,-0.00 L9.83,-0.64 L9.98,-1.31 L10.39,-2.07 L11.11,-2.98 L11.75,-3.99 L11.95,-4.95 L11.79,-5.81 L11.43,-6.60 L10.93,-7.30 L10.26,-7.87 L9.33,-8.18 L8.13,-8.13 L6.98,-7.96 L6.13,-7.99 L5.48,-8.19 L4.90,-8.49 L4.36,-8.84 L3.85,-9.30 L3.40,-10.03 L2.98,-11.11 L2.42,-12.17 L1.69,-12.82 L0.86,-13.12 L0.00,-13.20 L-0.86,-13.12 L-1.69,-12.82 L-2.42,-12.17 L-2.98,-11.11 L-3.40,-10.03 L-3.85,-9.30 L-4.36,-8.84 L-4.90,-8.49 L-5.48,-8.19 L-6.13,-7.99 L-6.98,-7.96 L-8.13,-8.13 L-9.33,-8.18 L-10.26,-7.87 L-10.93,-7.30 L-11.43,-6.60 L-11.79,-5.81 L-11.95,-4.95 L-11.75,-3.99 L-11.11,-2.98 L-10.39,-2.07 L-9.98,-1.31 L-9.83,-0.64 L-9.80,-0.00 L-9.83,0.64 L-9.98,1.31 L-10.39,2.07 L-11.11,2.98 L-11.75,3.99 L-11.95,4.95 L-11.79,5.81 L-11.43,6.60 L-10.93,7.30 L-10.26,7.87 L-9.33,8.18 L-8.13,8.13 L-6.98,7.96 L-6.13,7.99 L-5.48,8.19 L-4.90,8.49 L-4.36,8.84 L-3.85,9.30 L-3.40,10.03 L-2.98,11.11 L-2.42,12.17 L-1.69,12.82 L-0.86,13.12 L-0.00,13.20 L0.86,13.12 L1.69,12.82 L2.42,12.17 L2.98,11.11 L3.40,10.03 L3.85,9.30 L4.36,8.84 L4.90,8.49 L5.48,8.19 L6.13,7.99 L6.98,7.96 L8.13,8.13 L9.33,8.18 L10.26,7.87 L10.93,7.30 L11.43,6.60 L11.79,5.81 L11.95,4.95 L11.75,3.99 L11.11,2.98 L10.39,2.07 L9.98,1.31 L9.83,0.64Z"/><circle cx="0" cy="0" r="4.2" /></g>
<g fill="none" stroke="#bdc0c6" stroke-width="2.0" stroke-linecap="round" stroke-linejoin="round" ><path d="M2488.5,1206.5 L2496,1214.5 L2503.5,1206.5"/></g>
<g fill="none" stroke="#dfe1e5" stroke-width="2.0" stroke-linecap="round" stroke-linejoin="round" ><rect x="3193.3" y="1201" width="17.7" height="19.8" rx="4"/><path d="M3197.6,1197.3 a3,3 0 0 1 2.5,-1 h10.9 a4,4 0 0 1 4,4 v13 a3,3 0 0 1 -1,2.5"/></g>
<g fill="none" stroke="#dfe1e5" stroke-width="2.0" stroke-linecap="round" stroke-linejoin="round" stroke-linecap="butt"><path d="M3198,1207 H3206.3 M3198,1211.2 H3206.3 M3198,1215.4 H3206.3"/></g>
<g fill="none" stroke="#b0b1b3" stroke-width="4.4" stroke-linecap="round" stroke-linejoin="round" stroke-linecap="butt"><path d="M3243.89,1208.62 A9.5,9.5 0 1 1 3257.76,1215.69"/><path d="M3258.5,1214.5 L3267.6,1221.6"/></g>
<g fill="none" stroke="#b0b1b3" stroke-width="3.7" stroke-linecap="round" stroke-linejoin="round" stroke-linecap="butt" stroke-linejoin="miter"><path d="M3241.4,1225.6 L3247.7,1209.5 L3254,1225.6 M3244,1220.8 H3251.4"/></g>
<g fill="none" stroke="#dfe1e5" stroke-width="2.1" stroke-linecap="round" stroke-linejoin="round" transform="translate(3322 1210)"><path d="M9.80,-0.00 L9.83,-0.64 L9.98,-1.31 L10.39,-2.07 L11.11,-2.98 L11.75,-3.99 L11.95,-4.95 L11.79,-5.81 L11.43,-6.60 L10.93,-7.30 L10.26,-7.87 L9.33,-8.18 L8.13,-8.13 L6.98,-7.96 L6.13,-7.99 L5.48,-8.19 L4.90,-8.49 L4.36,-8.84 L3.85,-9.30 L3.40,-10.03 L2.98,-11.11 L2.42,-12.17 L1.69,-12.82 L0.86,-13.12 L0.00,-13.20 L-0.86,-13.12 L-1.69,-12.82 L-2.42,-12.17 L-2.98,-11.11 L-3.40,-10.03 L-3.85,-9.30 L-4.36,-8.84 L-4.90,-8.49 L-5.48,-8.19 L-6.13,-7.99 L-6.98,-7.96 L-8.13,-8.13 L-9.33,-8.18 L-10.26,-7.87 L-10.93,-7.30 L-11.43,-6.60 L-11.79,-5.81 L-11.95,-4.95 L-11.75,-3.99 L-11.11,-2.98 L-10.39,-2.07 L-9.98,-1.31 L-9.83,-0.64 L-9.80,-0.00 L-9.83,0.64 L-9.98,1.31 L-10.39,2.07 L-11.11,2.98 L-11.75,3.99 L-11.95,4.95 L-11.79,5.81 L-11.43,6.60 L-10.93,7.30 L-10.26,7.87 L-9.33,8.18 L-8.13,8.13 L-6.98,7.96 L-6.13,7.99 L-5.48,8.19 L-4.90,8.49 L-4.36,8.84 L-3.85,9.30 L-3.40,10.03 L-2.98,11.11 L-2.42,12.17 L-1.69,12.82 L-0.86,13.12 L-0.00,13.20 L0.86,13.12 L1.69,12.82 L2.42,12.17 L2.98,11.11 L3.40,10.03 L3.85,9.30 L4.36,8.84 L4.90,8.49 L5.48,8.19 L6.13,7.99 L6.98,7.96 L8.13,8.13 L9.33,8.18 L10.26,7.87 L10.93,7.30 L11.43,6.60 L11.79,5.81 L11.95,4.95 L11.75,3.99 L11.11,2.98 L10.39,2.07 L9.98,1.31 L9.83,0.64Z"/><circle cx="0" cy="0" r="4.2" /></g>
<g fill="none" stroke="#bdc0c6" stroke-width="2.0" stroke-linecap="round" stroke-linejoin="round" ><path d="M2488.5,1574.5 L2496,1582.5 L2503.5,1574.5"/></g>
<g fill="none" stroke="#dfe1e5" stroke-width="2.0" stroke-linecap="round" stroke-linejoin="round" ><rect x="3193.3" y="1569" width="17.7" height="19.8" rx="4"/><path d="M3197.6,1565.3 a3,3 0 0 1 2.5,-1 h10.9 a4,4 0 0 1 4,4 v13 a3,3 0 0 1 -1,2.5"/></g>
<g fill="none" stroke="#dfe1e5" stroke-width="2.0" stroke-linecap="round" stroke-linejoin="round" stroke-linecap="butt"><path d="M3198,1575 H3206.3 M3198,1579.2 H3206.3 M3198,1583.4 H3206.3"/></g>
<g fill="none" stroke="#b0b1b3" stroke-width="4.4" stroke-linecap="round" stroke-linejoin="round" stroke-linecap="butt"><path d="M3243.89,1576.62 A9.5,9.5 0 1 1 3257.76,1583.69"/><path d="M3258.5,1582.5 L3267.6,1589.6"/></g>
<g fill="none" stroke="#b0b1b3" stroke-width="3.7" stroke-linecap="round" stroke-linejoin="round" stroke-linecap="butt" stroke-linejoin="miter"><path d="M3241.4,1593.6 L3247.7,1577.5 L3254,1593.6 M3244,1588.8 H3251.4"/></g>
<g fill="none" stroke="#dfe1e5" stroke-width="2.1" stroke-linecap="round" stroke-linejoin="round" transform="translate(3322 1578)"><path d="M9.80,-0.00 L9.83,-0.64 L9.98,-1.31 L10.39,-2.07 L11.11,-2.98 L11.75,-3.99 L11.95,-4.95 L11.79,-5.81 L11.43,-6.60 L10.93,-7.30 L10.26,-7.87 L9.33,-8.18 L8.13,-8.13 L6.98,-7.96 L6.13,-7.99 L5.48,-8.19 L4.90,-8.49 L4.36,-8.84 L3.85,-9.30 L3.40,-10.03 L2.98,-11.11 L2.42,-12.17 L1.69,-12.82 L0.86,-13.12 L0.00,-13.20 L-0.86,-13.12 L-1.69,-12.82 L-2.42,-12.17 L-2.98,-11.11 L-3.40,-10.03 L-3.85,-9.30 L-4.36,-8.84 L-4.90,-8.49 L-5.48,-8.19 L-6.13,-7.99 L-6.98,-7.96 L-8.13,-8.13 L-9.33,-8.18 L-10.26,-7.87 L-10.93,-7.30 L-11.43,-6.60 L-11.79,-5.81 L-11.95,-4.95 L-11.75,-3.99 L-11.11,-2.98 L-10.39,-2.07 L-9.98,-1.31 L-9.83,-0.64 L-9.80,-0.00 L-9.83,0.64 L-9.98,1.31 L-10.39,2.07 L-11.11,2.98 L-11.75,3.99 L-11.95,4.95 L-11.79,5.81 L-11.43,6.60 L-10.93,7.30 L-10.26,7.87 L-9.33,8.18 L-8.13,8.13 L-6.98,7.96 L-6.13,7.99 L-5.48,8.19 L-4.90,8.49 L-4.36,8.84 L-3.85,9.30 L-3.40,10.03 L-2.98,11.11 L-2.42,12.17 L-1.69,12.82 L-0.86,13.12 L-0.00,13.20 L0.86,13.12 L1.69,12.82 L2.42,12.17 L2.98,11.11 L3.40,10.03 L3.85,9.30 L4.36,8.84 L4.90,8.49 L5.48,8.19 L6.13,7.99 L6.98,7.96 L8.13,8.13 L9.33,8.18 L10.26,7.87 L10.93,7.30 L11.43,6.60 L11.79,5.81 L11.95,4.95 L11.75,3.99 L11.11,2.98 L10.39,2.07 L9.98,1.31 L9.83,0.64Z"/><circle cx="0" cy="0" r="4.2" /></g>
<g fill="none" stroke="#7b848f" stroke-width="2.0" stroke-linecap="round" stroke-linejoin="round" ><circle cx="2492" cy="1952" r="12.6" /></g>
<path transform="translate(3133.5 1938.5) scale(1.125)" fill="#dfe1e5" d="M22.2819 9.8211a5.9847 5.9847 0 0 0-.5157-4.9108 6.0462 6.0462 0 0 0-6.5098-2.9A6.0651 6.0651 0 0 0 4.9807 4.1818a5.9847 5.9847 0 0 0-3.9977 2.9 6.0462 6.0462 0 0 0 .7427 7.0966 5.98 5.98 0 0 0 .511 4.9107 6.051 6.051 0 0 0 6.5146 2.9001A5.9847 5.9847 0 0 0 13.2599 24a6.0557 6.0557 0 0 0 5.7718-4.2058 5.9894 5.9894 0 0 0 3.9977-2.9001 6.0557 6.0557 0 0 0-.7475-7.0729zm-9.022 12.6081a4.4755 4.4755 0 0 1-2.8764-1.0408l.1419-.0804 4.7783-2.7582a.7948.7948 0 0 0 .3927-.6813v-6.7369l2.02 1.1686a.071.071 0 0 1 .038.052v5.5826a4.504 4.504 0 0 1-4.4945 4.4944zm-9.6607-4.1254a4.4708 4.4708 0 0 1-.5346-3.0137l.142.0852 4.783 2.7582a.7712.7712 0 0 0 .7806 0l5.8428-3.3685v2.3324a.0804.0804 0 0 1-.0332.0615L9.74 19.9502a4.4992 4.4992 0 0 1-6.1408-1.6464zM2.3408 7.8956a4.485 4.485 0 0 1 2.3655-1.9728V11.6a.7664.7664 0 0 0 .3879.6765l5.8144 3.3543-2.0201 1.1685a.0757.0757 0 0 1-.071 0l-4.8303-2.7865A4.504 4.504 0 0 1 2.3408 7.872zm16.5963 3.8558L13.1038 8.364 15.1192 7.2a.0757.0757 0 0 1 .071 0l4.8303 2.7913a4.4944 4.4944 0 0 1-.6765 8.1042v-5.6772a.79.79 0 0 0-.407-.667zm2.0107-3.0231l-.142-.0852-4.7735-2.7818a.7759.7759 0 0 0-.7854 0L9.409 9.2297V6.8974a.0662.0662 0 0 1 .0284-.0615l4.8303-2.7866a4.4992 4.4992 0 0 1 6.6802 4.66zM8.3065 12.863l-2.02-1.1638a.0804.0804 0 0 1-.038-.0567V6.0742a4.4992 4.4992 0 0 1 7.3757-3.4537l-.142.0805L8.704 5.459a.7948.7948 0 0 0-.3927.6813zm1.0976-2.3654l2.602-1.4998 2.6069 1.4998v2.9994l-2.5974 1.4997-2.6067-1.4997Z"/>
<path d="M3319,1947.5 h18 l-9,9.5 z" fill="#9da0a8"/>
<g fill="none" stroke="#ffffff" stroke-width="2.2" stroke-linecap="round" stroke-linejoin="round" ><path d="M3246.8,2020.6 L3276.8,2034 L3246.8,2047.6 L3251,2034 Z M3251,2034 H3263"/></g>
<g fill="none" stroke="#9da0a8" stroke-width="2.2" stroke-linecap="round" stroke-linejoin="round" ><path d="M245.75,2121.3 L253.25,2128.3 L245.75,2135.3"/></g>
<g transform="translate(276 2114) scale(1.1666666666666667)" fill-rule="evenodd"><path fill="#3f7cad" d="M14.25.18l.9.2.73.26.59.3.45.32.34.34.25.34.16.33.1.3.04.26.02.2-.01.13V8.5l-.05.63-.13.55-.21.46-.26.38-.3.31-.33.25-.35.19-.35.14-.33.1-.3.07-.26.04-.21.02H8.77l-.69.05-.59.14-.5.22-.41.27-.33.32-.27.35-.2.36-.15.37-.1.35-.07.32-.04.27-.02.21v3.06H3.17l-.21-.03-.28-.07-.32-.12-.35-.18-.36-.26-.36-.36-.35-.46-.32-.59-.28-.73-.21-.88-.14-1.05-.05-1.23.06-1.22.16-1.04.24-.87.32-.71.36-.57.4-.44.42-.33.42-.24.4-.16.36-.1.32-.05.24-.01h.16l.06.01h8.16v-.83H6.18l-.01-2.75-.02-.37.05-.34.11-.31.17-.28.25-.26.31-.23.38-.2.44-.18.51-.15.58-.12.64-.1.71-.06.77-.04.84-.02 1.27.05zM7.95 2.16l-.23.33-.08.41.08.41.23.34.33.22.41.09.41-.09.33-.22.23-.34.08-.41-.08-.41-.23-.33-.33-.22-.41-.09-.41.09z"/><path fill="#f6d04a" d="M21.04 6.11l.28.06.32.12.35.18.36.27.36.35.35.47.32.59.28.73.21.88.14 1.04.05 1.23-.06 1.23-.16 1.04-.24.86-.32.71-.36.57-.4.45-.42.33-.42.24-.4.16-.36.09-.32.05-.24.02-.16-.01h-8.22v.82h5.84l.01 2.76.02.36-.05.34-.11.31-.17.29-.25.25-.31.24-.38.2-.44.17-.51.15-.58.13-.64.09-.71.07-.77.04-.84.01-1.27-.04-1.07-.14-.9-.2-.73-.25-.59-.3-.45-.33-.34-.34-.25-.34-.16-.33-.1-.3-.04-.25-.02-.2.01-.13v-5.34l.05-.64.13-.54.21-.46.26-.38.3-.32.33-.24.35-.2.35-.14.33-.1.3-.06.26-.04.21-.02.13-.01h5.84l.69-.05.59-.14.5-.21.41-.28.33-.32.27-.35.2-.36.15-.36.1-.35.07-.32.04-.28.02-.21V6.07h2.09l.14.01zM14.57 20.36l-.23.33-.08.41.08.41.23.33.33.23.41.08.41-.08.33-.23.23-.33.08-.41-.08-.41-.23-.33-.33-.23-.41-.08-.41.08z"/></g>
<g fill="none" stroke="#8c9198" stroke-width="3.0" stroke-linecap="round" stroke-linejoin="round" ><path d="M2683.8,2129.5 L2689.6,2138.6 L2700,2121.6"/></g>
<g fill="none" stroke="#ced0d6" stroke-width="2.3" stroke-linecap="round" stroke-linejoin="round" ><rect x="3331.5" y="2130" width="17.5" height="11.5" rx="2.5"/><path d="M3344.2,2130 V2124.5 a5.2,5.2 0 0 1 10.4,0 V2127 M3340.2,2134 v3.5"/></g>
<g fill="none" stroke="#ced0d6" stroke-width="2.5" stroke-linecap="round" stroke-linejoin="round" ><circle cx="3404" cy="2130" r="12.8" /><path d="M3404,2123 V2131.5"/></g>
<circle cx="3404" cy="2136.3" r="1.9" fill="#ced0d6"/>
</svg>
</body></html>
